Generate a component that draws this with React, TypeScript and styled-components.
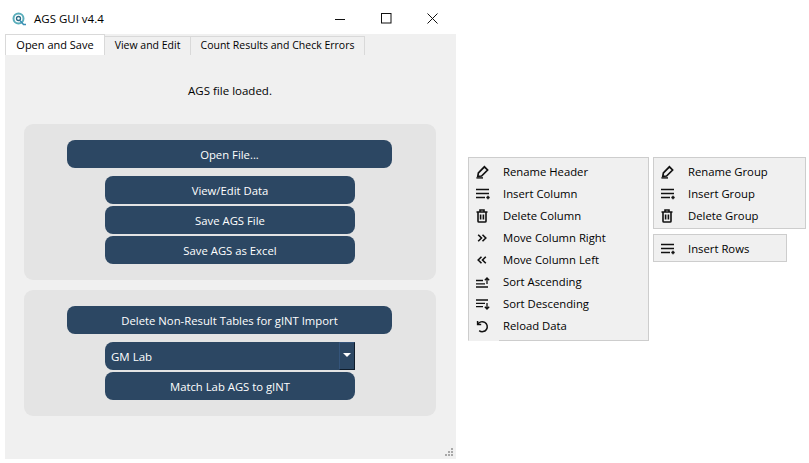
import React from "react";
import styled, { createGlobalStyle } from "styled-components";

const Global = createGlobalStyle`
  html, body { margin: 0; padding: 0; background: #ffffff; }
  body { font-family: "Open Sans", "Noto Sans", "Liberation Sans", sans-serif; font-size: 11.5px; color: #000; }
  #root { width: 809px; height: 463px; overflow: hidden; }
`;

const Page = styled.div`
  display: flex;
  align-items: flex-start;
  width: 809px;
  height: 463px;
  padding: 3px 0 0 5px;
  box-sizing: border-box;
`;
const Win = styled.div`
  width: 451px;
  height: 456px;
  display: flex;
  flex-direction: column;
  flex: none;
  position: relative;
  background: #f0f0f0;
`;
const TitleBar = styled.div`
  height: 31px;
  background: #fff;
  display: flex;
  align-items: center;
  padding-left: 7px;
  flex: none;
`;
const TitleText = styled.span`
  margin-left: 8px;
  font-size: 11.5px;
  color: #000;
`;
const WinButtons = styled.div`
  margin-left: auto;
  margin-right: 1px;
  display: flex;
`;
const WinBtn = styled.div`
  width: 46px;
  height: 31px;
  display: flex;
  align-items: center;
  justify-content: center;
`;
const TabBar = styled.div`
  display: flex;
  align-items: flex-end;
  height: 21px;
  flex: none;
`;
const Tab = styled.div<{ $active?: boolean; $w: number }>`
  width: ${(p) => p.$w}px;
  height: ${(p) => (p.$active ? 21 : 19)}px;
  flex: none;
  box-sizing: border-box;
  display: flex;
  align-items: center;
  justify-content: center;
  padding-bottom: ${(p) => (p.$active ? 1 : 2)}px;
  background: ${(p) => (p.$active ? "#fff" : "#f0f0f0")};
  border: 1px solid #d9d9d9;
  border-bottom: none;
  border-left: ${(p) => (p.$active ? "1px solid #d9d9d9" : "none")};
  font-size: ${(p) => (p.$active ? 11 : 10.5)}px;
  white-space: nowrap;
`;
const Body = styled.div`
  flex: 1;
  display: flex;
  flex-direction: column;
  padding: 0 20px 0 19px;
`;
const Status = styled.div`
  height: 69px;
  display: flex;
  align-items: center;
  justify-content: center;
  padding-top: 2px;
  box-sizing: border-box;
  font-size: 11.5px;
`;
const Group = styled.div<{ $h: number }>`
  height: ${(p) => p.$h}px;
  background: #e4e4e4;
  border-radius: 9px;
  display: flex;
  flex-direction: column;
  align-items: center;
  padding-top: 16px;
  box-sizing: border-box;
  margin-bottom: 10px;
`;
const Btn = styled.div<{ $wide?: boolean; $gap: number }>`
  width: ${(p) => (p.$wide ? 325 : 250)}px;
  height: 28px;
  flex: none;
  margin-bottom: ${(p) => p.$gap}px;
  margin-right: ${(p) => (p.$wide ? 1 : 0)}px;
  border-radius: 8px;
  background: #2c4763;
  color: #fff;
  display: flex;
  align-items: center;
  justify-content: center;
  font-size: 11.3px;
`;
const Combo = styled.div`
  width: 250px;
  height: 28px;
  flex: none;
  margin-bottom: 2px;
  border-radius: 8px 0 0 8px;
  background: #2c4763;
  color: #fff;
  display: flex;
  align-items: center;
  padding-left: 6px;
  box-sizing: border-box;
  position: relative;
  font-size: 11.5px;
`;
const ComboArrow = styled.div`
  position: absolute;
  right: 0;
  top: 0;
  width: 16px;
  height: 28px;
  box-sizing: border-box;
  border: 1px solid #34547a;
  border-right: 1px solid #0f1c2a;
  border-bottom: 1px solid #0f1c2a;
  display: flex;
  align-items: center;
  justify-content: center;
  padding-bottom: 2px;
`;
const Triangle = styled.div`
  width: 0;
  height: 0;
  border-left: 4px solid transparent;
  border-right: 4px solid transparent;
  border-top: 4px solid #fff;
`;
const Grip = styled.svg`
  position: absolute;
  right: 2px;
  bottom: 2px;
`;
const Menus = styled.div`
  display: flex;
  align-items: flex-start;
  gap: 4px;
  margin: 154px 0 0 12px;
`;
const MenuColumn = styled.div`
  display: flex;
  flex-direction: column;
  gap: 5px;
`;
const Menu = styled.div<{ $w: number; $top: number; $bottom: number; $cut?: boolean }>`
  width: ${(p) => p.$w}px;
  box-sizing: border-box;
  background: #f0f0f0;
  border: 1px solid #cdcdcd;
  border-bottom: ${(p) => (p.$cut ? "1px solid #f0f0f0" : "1px solid #cdcdcd")};
  padding: ${(p) => p.$top}px 0 ${(p) => p.$bottom}px;
  position: relative;
  ${(p) =>
    p.$cut
      ? `&::after { content: ""; position: absolute; left: 30px; right: -1px; bottom: -1px; height: 1px; background: #cdcdcd; }`
      : ""}
`;
const Row = styled.div`
  height: 22px;
  display: flex;
  align-items: center;
  font-size: 11.3px;
  color: #000;
  padding-bottom: 2px;
  box-sizing: border-box;
`;
const IconSlot = styled.div`
  width: 34px;
  height: 16px;
  margin-top: 2px;
  flex: none;
  position: relative;
  display: flex;
  align-items: center;
  justify-content: flex-start;
  padding-left: 7px;
  box-sizing: border-box;
`;

const Pencil = () => (
  <svg width="14" height="14" viewBox="0 0 14 14" fill="none" stroke="#111" strokeWidth="1.7">
    <path d="M2.4 7.8 8.4 1.8 11.6 5 5.6 11 1.8 11.4Z" />
    <path d="M.4 12.9H7" strokeWidth="1.4" />
  </svg>
);
const InsertLines = () => (
  <svg width="14" height="12" viewBox="0 0 14 12" fill="none" stroke="#111" strokeWidth="1.5">
    <path d="M0 1.5H13M0 5.5H13M0 9.5H9" />
    <path d="M12 7.8V11.2M10.3 9.5H13.7" strokeWidth="1.5" />
  </svg>
);
const Trash = () => (
  <svg width="12" height="14" viewBox="0 0 12 14" fill="none" stroke="#111" strokeWidth="1.6">
    <path d="M0.5 3H11.5M4 3V1H8V3" />
    <path d="M2 3V12.2Q2 13 3 13H9Q10 13 10 12.2V3" />
    <path d="M4.6 5.5V10.5M7.4 5.5V10.5" />
  </svg>
);
const Chevrons = ({ left }: { left?: boolean }) => (
  <svg width="10" height="8" viewBox="0 0 10 8" fill="none" stroke="#111" strokeWidth="1.6" style={{ marginLeft: 1 }}>
    <path d={left ? "M4.5 .7 1.2 4 4.5 7.3M8.8 .7 5.5 4 8.8 7.3" : "M1.2 .7 4.5 4 1.2 7.3M5.5 .7 8.8 4 5.5 7.3"} />
  </svg>
);
const SortAsc = () => (
  <svg width="14" height="11" viewBox="0 0 14 11" fill="none" stroke="#111" strokeWidth="1.3">
    <path d="M0 3.5H7M0 6.8H9M0 10H12" />
    <path d="M11 7V1M8.8 3.2 11 1 13.2 3.2" />
  </svg>
);
const SortDesc = () => (
  <svg width="14" height="11" viewBox="0 0 14 11" fill="none" stroke="#111" strokeWidth="1.3">
    <path d="M0 1H12M0 4.3H9M0 7.6H7" />
    <path d="M11 4V10M8.8 7.8 11 10 13.2 7.8" />
  </svg>
);
const Reload = () => (
  <svg width="13" height="13" viewBox="0 0 13 13" fill="none" stroke="#111" strokeWidth="1.5">
    <path d="M1.6 1V4.6H5.2" />
    <path d="M1.8 4.4A5 5 0 1 1 3.2 10.6" />
  </svg>
);

const column = [
  ["Rename Header", <Pencil />],
  ["Insert Column", <InsertLines />],
  ["Delete Column", <Trash />],
  ["Move Column Right", <Chevrons />],
  ["Move Column Left", <Chevrons left />],
  ["Sort Ascending", <SortAsc />],
  ["Sort Descending", <SortDesc />],
  ["Reload Data", <Reload />],
] as const;
const group = [
  ["Rename Group", <Pencil />],
  ["Insert Group", <InsertLines />],
  ["Delete Group", <Trash />],
] as const;

export default function App() {
  return (
    <Page>
      <Global />
      <Win>
        <TitleBar>
          <svg width="14" height="14" viewBox="0 0 14 14" fill="none">
            <circle cx="6.5" cy="6.5" r="5" stroke="#5aaebb" strokeWidth="2" />
            <circle cx="6.5" cy="6.5" r="2" stroke="#2b6a86" strokeWidth="1.3" />
            <path d="M8 8.5 11.5 12.5H14" stroke="#3a8fb5" strokeWidth="1.5" />
          </svg>
          <TitleText>AGS GUI v4.4</TitleText>
          <WinButtons>
            <WinBtn>
              <svg width="11" height="11" viewBox="0 0 11 11"><path d="M0 6.5H10" stroke="#111" fill="none" /></svg>
            </WinBtn>
            <WinBtn>
              <svg width="11" height="11" viewBox="0 0 11 11"><rect x=".5" y=".5" width="9.5" height="9.5" stroke="#111" fill="none" /></svg>
            </WinBtn>
            <WinBtn>
              <svg width="11" height="11" viewBox="0 0 11 11"><path d="M.5 .5 10.5 10.5M10.5 .5 .5 10.5" stroke="#111" fill="none" /></svg>
            </WinBtn>
          </WinButtons>
        </TitleBar>
        <TabBar>
          <Tab $active $w={100}>Open and Save</Tab>
          <Tab $w={86}>View and Edit</Tab>
          <Tab $w={174}>Count Results and Check Errors</Tab>
        </TabBar>
        <Body>
          <Status>AGS file loaded.</Status>
          <Group $h={156}>
            <Btn $wide $gap={8}>Open File...</Btn>
            <Btn $gap={2}>View/Edit Data</Btn>
            <Btn $gap={2}>Save AGS File</Btn>
            <Btn $gap={0}>Save AGS as Excel</Btn>
          </Group>
          <Group $h={126}>
            <Btn $wide $gap={8}>Delete Non-Result Tables for gINT Import</Btn>
            <Combo>
              GM Lab
              <ComboArrow><Triangle /></ComboArrow>
            </Combo>
            <Btn $gap={0}>Match Lab AGS to gINT</Btn>
          </Group>
        </Body>
        <Grip width="10" height="10" viewBox="0 0 10 10" fill="#a8a8a8">
          <rect x="7" y="1" width="2" height="2" />
          <rect x="4" y="4" width="2" height="2" />
          <rect x="7" y="4" width="2" height="2" />
          <rect x="1" y="7" width="2" height="2" />
          <rect x="4" y="7" width="2" height="2" />
          <rect x="7" y="7" width="2" height="2" />
        </Grip>
      </Win>
      <Menus>
        <Menu $w={181} $top={3} $bottom={3} $cut>
          {column.map(([label, icon]) => (
            <Row key={label}><IconSlot>{icon}</IconSlot>{label}</Row>
          ))}
        </Menu>
        <MenuColumn>
          <Menu $w={153} $top={3} $bottom={1}>
            {group.map(([label, icon]) => (
              <Row key={label}><IconSlot>{icon}</IconSlot>{label}</Row>
            ))}
          </Menu>
          <Menu $w={134} $top={3} $bottom={1}>
            <Row><IconSlot><InsertLines /></IconSlot>Insert Rows</Row>
          </Menu>
        </MenuColumn>
      </Menus>
    </Page>
  );
}
